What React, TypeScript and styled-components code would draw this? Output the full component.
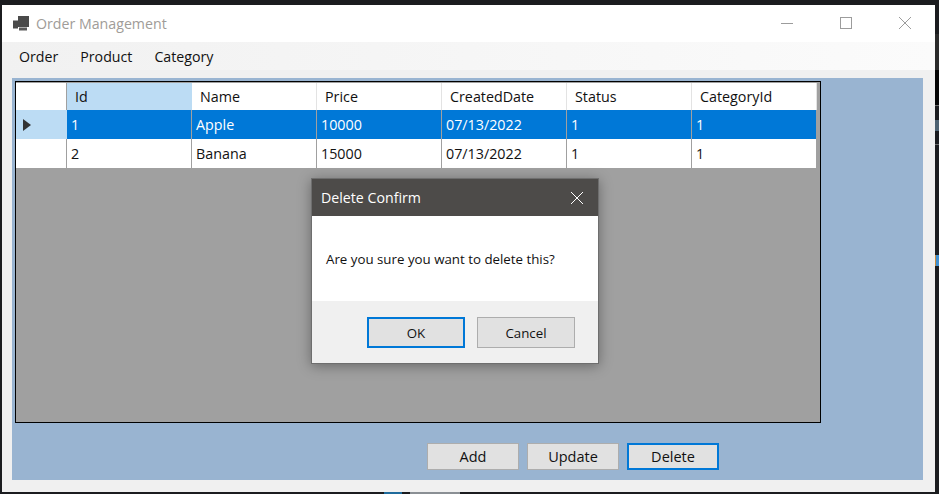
import styled, {createGlobalStyle} from 'styled-components'

const COLUMNS = ['Id', 'Name', 'Price', 'CreatedDate', 'Status', 'CategoryId']

const ROWS = [
   ['1', 'Apple', '10000', '07/13/2022', '1', '1'],
   ['2', 'Banana', '15000', '07/13/2022', '1', '1'],
]

// bits of the desktop that show around the window
const SLIVERS = [
   {left: 935, top: 34, width: 4, height: 36, color: '#2b2b2b'},
   {left: 935, top: 70, width: 4, height: 35, color: '#050505'},
   {left: 935, top: 105, width: 4, height: 1, color: '#6a6a6a'},
   {left: 935, top: 120, width: 4, height: 11, color: '#4d6272'},
   {left: 935, top: 144, width: 4, height: 1, color: '#6a6a6a'},
   {left: 935, top: 255, width: 1, height: 11, color: '#c58a3c'},
   {left: 936, top: 255, width: 3, height: 11, color: '#3f8fd0'},
   {left: 384, top: 492, width: 18, height: 2, color: '#1f6b9c'},
   {left: 410, top: 492, width: 50, height: 2, color: '#8a8f94'},
]

const GlobalStyle = createGlobalStyle`
   html, body {
      margin: 0;
      padding: 0;
      width: 939px;
      height: 494px;
      overflow: hidden;
      background: #1b1c1f;
      font-family: "Open Sans", "Noto Sans", sans-serif;
   }
`

const Screen = styled.div`
   position: relative;
   width: 939px;
   height: 494px;
   padding: 5px 4px 2px 2px;
   box-sizing: border-box;
`

const Sliver = styled.div<{$left: number, $top: number, $width: number, $height: number, $color: string}>`
   position: absolute;
   left: ${({$left}) => $left}px;
   top: ${({$top}) => $top}px;
   width: ${({$width}) => $width}px;
   height: ${({$height}) => $height}px;
   background: ${({$color}) => $color};
`

const Window = styled.div`
   height: 100%;
   background: #f0f0f0;
   display: flex;
   flex-direction: column;
`

const TitleBar = styled.div`
   height: 37px;
   flex: none;
   background: #fff;
   display: flex;
   align-items: center;
   padding-left: 11px;
`

const AppIcon = styled.svg`
   width: 16px;
   height: 16px;
   flex: none;
`

const TitleText = styled.span`
   margin-left: 7px;
   font-size: 14.2px;
   color: #a09c98;
`

const WindowControls = styled.div`
   margin-left: auto;
   display: flex;
   align-items: center;
   padding-right: 20px;
   gap: 39px;
   margin-top: -2px;
`

const ControlIcon = styled.svg`
   width: 20px;
   height: 20px;
   display: block;
   stroke: #9c9c9c;
   fill: none;
`

const MenuBar = styled.div`
   height: 28px;
   flex: none;
   display: flex;
   align-items: center;
   gap: 22px;
   padding-left: 17px;
   background: linear-gradient(to right, #f1f1f1, #fbfbfb);
`

const MenuItem = styled.span`
   font-size: 14.2px;
   color: #111;
`

const Content = styled.div`
   flex: 1;
   padding: 8px 12px 12px 10px;
   display: flex;
`

const Panel = styled.div`
   flex: 1;
   background: #99b4d1;
   padding: 3px 0 0 3px;
`

const Grid = styled.div`
   width: 806px;
   height: 342px;
   box-sizing: border-box;
   border: 1px solid #000;
   background: #a0a0a0;
   padding: 1px 3px 0 0;
`

const GridRow = styled.div<{$header?: boolean}>`
   display: grid;
   grid-template-columns: 51px repeat(6, 125px);
   height: ${({$header}) => ($header ? '27px' : '29px')};
   box-sizing: border-box;
   border-bottom: 1px solid #a0a0a0;
`

const RowHeader = styled.div<{$active?: boolean}>`
   background: ${({$active}) => ($active ? '#bcdcf4' : '#fff')};
   border-right: ${({$active}) => ($active ? 'none' : '1px solid #a0a0a0')};
   display: flex;
   align-items: center;
   padding-left: 7px;
`

const ColumnHead = styled.div<{$active?: boolean}>`
   background: ${({$active}) => ($active ? '#bcdcf4' : '#fff')};
   border-right: ${({$active}) => ($active ? 'none' : '1px solid #e3e3e3')};
   padding-left: 8px;
   font-size: 14.3px;
   line-height: 28px;
   color: #111;
`

const Cell = styled.div<{$selected?: boolean}>`
   background: ${({$selected}) => ($selected ? '#0078d7' : '#fff')};
   color: ${({$selected}) => ($selected ? '#fff' : '#111')};
   border-right: 1px solid #a0a0a0;
   padding: 1px 0 0 4px;
   font-size: 14.3px;
   line-height: 28px;
`

const Arrow = styled.svg`
   width: 8px;
   height: 12px;
   fill: #333;
`

const Actions = styled.div`
   display: flex;
   gap: 8px;
   margin-top: 20px;
   padding-left: 412px;
`

const Button = styled.button<{$focused?: boolean}>`
   width: 92px;
   height: 27px;
   padding: 0;
   box-sizing: border-box;
   background: #e1e1e1;
   border: ${({$focused}) => ($focused ? '2px solid #0078d7' : '1px solid #adadad')};
   font-family: inherit;
   font-size: 14.5px;
   color: #111;
`

const Dialog = styled.div`
   position: absolute;
   left: 311px;
   top: 178px;
   width: 288px;
   height: 186px;
   box-sizing: border-box;
   display: flex;
   flex-direction: column;
   border: 1px solid #6e6e6e;
   box-shadow: 0 2px 12px rgba(0, 0, 0, 0.35);
   background: #f0f0f0;
`

const DialogTitle = styled.div`
   height: 37px;
   flex: none;
   background: #4d4b49;
   color: #fff;
   font-size: 14.2px;
   display: flex;
   align-items: center;
   justify-content: space-between;
   padding: 0 14px 0 9px;
`

const CloseIcon = styled.svg`
   width: 14px;
   height: 14px;
   stroke: #fff;
   fill: none;
   display: block;
`

const DialogBody = styled.div`
   height: 85px;
   flex: none;
   background: #fff;
   display: flex;
   align-items: center;
   padding-left: 14px;
   font-size: 13.3px;
   color: #111;
`

const DialogFooter = styled.div`
   flex: 1;
   display: flex;
   gap: 12px;
   padding: 16px 0 0 55px;
`

const DialogButton = styled(Button)`
   width: 98px;
   height: 31px;
   font-size: 13.3px;
`

const App = () => {
   return (
      <Screen>
         <GlobalStyle />
         {SLIVERS.map(s => (
            <Sliver
               key={`${s.left}-${s.top}`}
               $left={s.left}
               $top={s.top}
               $width={s.width}
               $height={s.height}
               $color={s.color}
            />
         ))}
         <Window>
            <TitleBar>
               <AppIcon viewBox="0 0 16 16">
                  <rect x="0" y="4.5" width="5" height="8" fill="#4a4a4a" />
                  <rect x="5" y="0" width="11" height="11" fill="#4a4a4a" />
                  <rect x="6" y="11.5" width="8" height="3" fill="#5a5a5a" />
               </AppIcon>
               <TitleText>Order Management</TitleText>
               <WindowControls>
                  <ControlIcon viewBox="0 0 20 20">
                     <path d="M4 10.5h12" />
                  </ControlIcon>
                  <ControlIcon viewBox="0 0 20 20">
                     <rect x="4.5" y="4.5" width="11" height="11" />
                  </ControlIcon>
                  <ControlIcon viewBox="0 0 20 20">
                     <path d="M4 4l12 12M16 4L4 16" />
                  </ControlIcon>
               </WindowControls>
            </TitleBar>
            <MenuBar>
               <MenuItem>Order</MenuItem>
               <MenuItem>Product</MenuItem>
               <MenuItem>Category</MenuItem>
            </MenuBar>
            <Content>
               <Panel>
                  <Grid>
                     <GridRow $header>
                        <RowHeader />
                        {COLUMNS.map((name, i) => (
                           <ColumnHead key={name} $active={i === 0}>{name}</ColumnHead>
                        ))}
                     </GridRow>
                     {ROWS.map((row, r) => (
                        <GridRow key={row[0]}>
                           <RowHeader $active={r === 0}>
                              {r === 0 && (
                                 <Arrow viewBox="0 0 8 12">
                                    <path d="M0 0l8 6-8 6z" />
                                 </Arrow>
                              )}
                           </RowHeader>
                           {row.map((value, c) => (
                              <Cell key={c} $selected={r === 0}>{value}</Cell>
                           ))}
                        </GridRow>
                     ))}
                  </Grid>
                  <Actions>
                     <Button>Add</Button>
                     <Button>Update</Button>
                     <Button $focused>Delete</Button>
                  </Actions>
               </Panel>
            </Content>
         </Window>
         <Dialog>
            <DialogTitle>
               Delete Confirm
               <CloseIcon viewBox="0 0 14 14">
                  <path d="M1 1l12 12M13 1L1 13" />
               </CloseIcon>
            </DialogTitle>
            <DialogBody>Are you sure you want to delete this?</DialogBody>
            <DialogFooter>
               <DialogButton $focused>OK</DialogButton>
               <DialogButton>Cancel</DialogButton>
            </DialogFooter>
         </Dialog>
      </Screen>
   )
}

export default App
